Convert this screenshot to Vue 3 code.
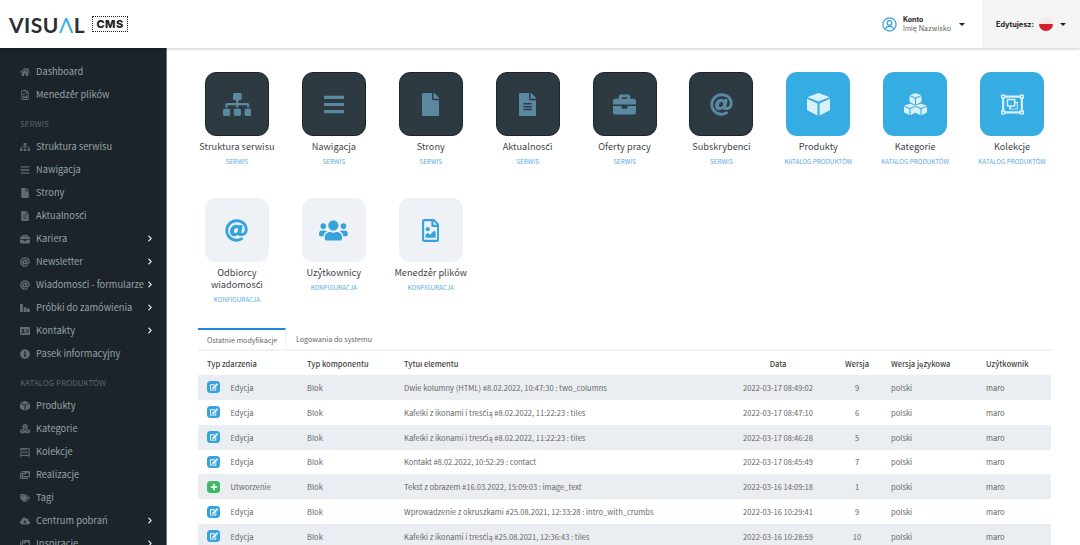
<template>
  <div class="page">
    <header class="topbar">
      <div class="logo">
        <span class="logo-word">VISU<span class="logo-a">Λ</span>L</span>
        <span class="logo-cms">CMS</span>
      </div>
      <div class="account">
        <svg class="account-icon" viewBox="0 0 24 24">
          <circle cx="12" cy="12" r="10.5" />
          <circle cx="12" cy="9.5" r="3.8" />
          <path d="M5.2 19.5c.8-3 3-4.6 6.8-4.6s6 1.6 6.8 4.6" />
        </svg>
        <div class="account-text">
          <strong>Konto</strong>
          <span>Imię Nazwisko</span>
        </div>
        <i class="caret" />
      </div>
      <div class="lang">
        <strong>Edytujesz:</strong>
        <span class="flag" />
        <i class="caret" />
      </div>
    </header>

    <div class="body">
      <aside class="sidebar">
        <template v-for="item in menu" :key="item.label">
          <div v-if="item.section" class="menu-section">{{ item.label }}</div>
          <div v-else class="menu-item">
            <svg class="menu-icon" :viewBox="icons[item.icon].box">
              <path v-for="(d, i) in icons[item.icon].paths" :key="i" :d="d.d || d" :transform="d.t" />
            </svg>
            <span class="menu-label">{{ item.label }}</span>
            <svg v-if="item.more" class="menu-more" :viewBox="icons.chevron.box">
              <path :d="icons.chevron.paths[0]" />
            </svg>
          </div>
        </template>
      </aside>

      <main class="content">
        <section class="tiles">
          <a v-for="tile in tiles" :key="tile.label" :class="['tile', tile.kind]">
            <span class="tile-box">
              <svg :viewBox="icons[tile.icon].box">
                <path v-for="(d, i) in icons[tile.icon].paths" :key="i" :d="d.d || d" :transform="d.t" />
              </svg>
            </span>
            <span class="tile-label">{{ tile.label }}</span>
            <span class="tile-group">{{ tile.group }}</span>
          </a>
        </section>

        <nav class="tabs">
          <span class="tab active">Ostatnie modyfikacje</span>
          <span class="tab">Logowania do systemu</span>
        </nav>

        <table class="events">
          <colgroup>
            <col style="width: 100px" />
            <col style="width: 97px" />
            <col style="width: 326px" />
            <col style="width: 114px" />
            <col style="width: 44px" />
            <col style="width: 98px" />
            <col style="width: 74px" />
          </colgroup>
          <thead>
            <tr>
              <th>Typ zdarzenia</th>
              <th>Typ komponentu</th>
              <th>Tytuł elementu</th>
              <th class="center">Data</th>
              <th class="center">Wersja</th>
              <th class="lang-col">Wersja językowa</th>
              <th>Użytkownik</th>
            </tr>
          </thead>
          <tbody>
            <tr v-for="row in rows" :key="row.date">
              <td>
                <div class="event">
                  <span :class="['event-badge', row.type === 'Edycja' ? 'edit' : 'create']">
                    <svg viewBox="0 0 576 512" v-if="row.type === 'Edycja'"><path :d="icons.edit.paths[0]" /></svg>
                    <svg viewBox="0 0 10 10" v-else><path d="M4 1h2v3h3v2H6v3H4V6H1V4h3z" /></svg>
                  </span>
                  {{ row.type }}
                </div>
              </td>
              <td>Blok</td>
              <td>{{ row.title }}</td>
              <td class="center">{{ row.date }}</td>
              <td class="center">{{ row.version }}</td>
              <td class="lang-col">polski</td>
              <td class="user">maro</td>
            </tr>
          </tbody>
        </table>
      </main>
    </div>
  </div>
</template>

<script setup>
const cubeSolid = 'M239.1 6.3l-208 78c-6 2.2-11 5.6-15.6 10L256 190l240.5-95.7c-4.6-4.4-9.6-7.8-15.6-10l-208-78C262 2.2 250 2.2 239.1 6.3zM0 129v225.4c0 18.2 10.3 34.8 26.5 42.9L232 500V232L0 129zm280 371l205.500-102.700c16.300-8.100 26.500-24.800 26.500-42.900V129L280 232z'
const at = 'M256 8C118.941 8 8 118.919 8 256c0 137.059 110.919 248 248 248 48.154 0 95.342-14.14 135.408-40.223 12.005-7.815 14.625-24.288 5.552-35.372l-10.177-12.433c-7.671-9.371-21.179-11.667-31.373-5.129C325.92 429.757 291.314 440 256 440c-101.458 0-184-82.542-184-184S154.542 72 256 72c100.139 0 184 57.619 184 160 0 38.786-21.093 79.742-58.17 83.693-17.349-.454-16.91-12.857-13.476-30.024l23.433-121.11C394.653 149.75 383.308 136 368.225 136h-44.981a13.518 13.518 0 0 0-13.432 11.993l-.01.092c-14.697-17.901-40.448-21.775-59.971-21.775-74.58 0-137.831 62.234-137.831 151.46 0 65.303 36.785 105.87 96 105.87 26.984 0 57.369-15.637 74.991-38.333 9.522 34.104 40.613 34.103 70.71 34.103C462.609 379.41 504 307.798 504 232 504 95.653 394.023 8 256 8zm-21.68 304.43c-22.249 0-36.07-15.623-36.07-40.771 0-44.993 30.779-72.729 58.63-72.729 22.292 0 35.601 15.241 35.601 40.77 0 45.061-33.875 72.73-58.161 72.73z'
const objectGroup = 'M500 128c6.6 0 12-5.4 12-12V44c0-6.6-5.4-12-12-12h-72c-6.6 0-12 5.4-12 12v12H96V44c0-6.6-5.4-12-12-12H12C5.4 32 0 37.4 0 44v72c0 6.6 5.4 12 12 12h12v256H12c-6.6 0-12 5.4-12 12v72c0 6.6 5.4 12 12 12h72c6.6 0 12-5.4 12-12v-12h320v12c0 6.6 5.4 12 12 12h72c6.6 0 12-5.4 12-12v-72c0-6.6-5.4-12-12-12h-12V128h12zM448 64h32v32h-32V64zM32 64h32v32H32V64zm32 384H32v-32h32v32zm416 0h-32v-32h32v32zm-48-64h-12c-6.6 0-12 5.4-12 12v12H96v-12c0-6.6-5.4-12-12-12H72V128h12c6.6 0 12-5.4 12-12v-12h320v12c0 6.6 5.4 12 12 12h12v256zM362.500 192H320v-52c0-6.600-5.400-12-12-12H140c-6.600 0-12 5.400-12 12v152c0 6.600 5.400 12 12 12h42.500v52c0 6.600 5.400 12 12 12h168c6.600 0 12-5.400 12-12V204c0-6.600-5.400-12-12-12zM160 160h128v112H160V160zm192 192H224v-48h84c6.600 0 12-5.400 12-12v-68h32v128z'

const icons = {
  home: { box: '0 0 576 512', paths: ['M280.37 148.26L96 300.11V464a16 16 0 0 0 16 16l112.06-.29a16 16 0 0 0 15.92-16V368a16 16 0 0 1 16-16h64a16 16 0 0 1 16 16v95.64a16 16 0 0 0 16 16.05L464 480a16 16 0 0 0 16-16V300L295.67 148.26a12.19 12.19 0 0 0-15.3 0zM571.6 251.47L488 182.56V44.05a12 12 0 0 0-12-12h-56a12 12 0 0 0-12 12v72.61L318.47 43a48 48 0 0 0-61 0L4.34 251.47a12 12 0 0 0-1.6 16.9l25.5 31A12 12 0 0 0 45.15 301l235.22-193.74a12.19 12.19 0 0 1 15.3 0L530.9 301a12 12 0 0 0 16.9-1.6l25.5-31a12 12 0 0 0-1.7-16.93z'] },
  fileImage: { box: '0 0 384 512', paths: ['M369.9 97.9L286 14C277 5 264.8-.1 252.1-.1H48C21.5 0 0 21.5 0 48v416c0 26.5 21.5 48 48 48h288c26.5 0 48-21.5 48-48V131.9c0-12.7-5.1-25-14.1-34zM332.1 128H256V51.9l76.1 76.1zM48 464V48h160v104c0 13.3 10.7 24 24 24h104v288H48zm32-48h224V288l-23.5-23.5c-4.7-4.7-12.3-4.7-17 0L176 352l-39.5-39.5c-4.7-4.700-12.300-4.700-17 0L80 352v64zm48-240c-26.5 0-48 21.5-48 48s21.5 48 48 48 48-21.5 48-48-21.5-48-48-48z'] },
  sitemap: { box: '0 0 640 512', paths: ['M128 352H32c-17.67 0-32 14.33-32 32v96c0 17.67 14.33 32 32 32h96c17.67 0 32-14.33 32-32v-96c0-17.67-14.33-32-32-32zm-24-80h192v48h48v-48h192v48h48v-57.59c0-21.17-17.23-38.41-38.41-38.41H344v-64h40c17.67 0 32-14.33 32-32V32c0-17.67-14.33-32-32-32H256c-17.67 0-32 14.33-32 32v96c0 17.67 14.33 32 32 32h40v64H94.41C73.23 224 56 241.23 56 262.41V320h48v-48zm264 80h-96c-17.67 0-32 14.33-32 32v96c0 17.67 14.33 32 32 32h96c17.67 0 32-14.33 32-32v-96c0-17.67-14.33-32-32-32zm240 0h-96c-17.67 0-32 14.33-32 32v96c0 17.67 14.33 32 32 32h96c17.67 0 32-14.33 32-32v-96c0-17.67-14.33-32-32-32z'] },
  bars: { box: '0 0 448 512', paths: ['M16 132h416c8.837 0 16-7.163 16-16V76c0-8.837-7.163-16-16-16H16C7.163 60 0 67.163 0 76v40c0 8.837 7.163 16 16 16zm0 160h416c8.837 0 16-7.163 16-16v-40c0-8.837-7.163-16-16-16H16c-8.837 0-16 7.163-16 16v40c0 8.837 7.163 16 16 16zm0 160h416c8.837 0 16-7.163 16-16v-40c0-8.837-7.163-16-16-16H16c-8.837 0-16 7.163-16 16v40c0 8.837 7.163 16 16 16z'] },
  file: { box: '0 0 384 512', paths: ['M224 136V0H24C10.7 0 0 10.7 0 24v464c0 13.3 10.7 24 24 24h336c13.3 0 24-10.7 24-24V160H248c-13.2 0-24-10.8-24-24zm160-14.1v6.1H256V0h6.1c6.4 0 12.5 2.5 17 7l97.9 98c4.5 4.5 7 10.6 7 16.9z'] },
  fileAlt: { box: '0 0 384 512', paths: ['M224 136V0H24C10.7 0 0 10.7 0 24v464c0 13.3 10.7 24 24 24h336c13.3 0 24-10.7 24-24V160H248c-13.2 0-24-10.8-24-24zm64 236c0 6.6-5.4 12-12 12H108c-6.6 0-12-5.4-12-12v-8c0-6.6 5.4-12 12-12h168c6.6 0 12 5.4 12 12v8zm0-64c0 6.6-5.4 12-12 12H108c-6.6 0-12-5.4-12-12v-8c0-6.6 5.4-12 12-12h168c6.6 0 12 5.4 12 12v8zm0-72v8c0 6.6-5.4 12-12 12H108c-6.6 0-12-5.4-12-12v-8c0-6.6 5.4-12 12-12h168c6.6 0 12 5.4 12 12zm96-114.1v6.1H256V0h6.1c6.4 0 12.5 2.5 17 7l97.9 98c4.5 4.5 7 10.6 7 16.9z'] },
  briefcase: { box: '0 0 512 512', paths: ['M320 336c0 8.84-7.16 16-16 16h-96c-8.84 0-16-7.16-16-16v-48H0v144c0 25.6 22.4 48 48 48h416c25.6 0 48-22.4 48-48V288H320v48zm144-208h-80V80c0-25.6-22.4-48-48-48H176c-25.6 0-48 22.4-48 48v48H48c-25.6 0-48 22.4-48 48v80h512v-80c0-25.6-22.4-48-48-48zm-144 0H192V96h128v32z'] },
  at: { box: '0 0 512 512', paths: [at] },
  cube: { box: '0 0 512 512', paths: [cubeSolid] },
  cubes: {
    box: '0 0 512 512',
    paths: [
      { d: cubeSolid, t: 'translate(123 0) scale(.52)' },
      { d: cubeSolid, t: 'translate(0 235) scale(.52)' },
      { d: cubeSolid, t: 'translate(246 235) scale(.52)' },
    ],
  },
  group: { box: '0 0 512 512', paths: [objectGroup] },
  users: { box: '0 0 640 512', paths: ['M96 224c35.3 0 64-28.7 64-64s-28.7-64-64-64-64 28.7-64 64 28.7 64 64 64zm448 0c35.3 0 64-28.7 64-64s-28.7-64-64-64-64 28.7-64 64 28.7 64 64 64zm32 32h-64c-17.6 0-33.5 7.1-45.1 18.6 40.3 22.1 68.9 62 75.1 109.4h66c17.7 0 32-14.3 32-32v-32c0-35.3-28.7-64-64-64zm-256 0c61.9 0 112-50.1 112-112S381.9 32 320 32 208 82.1 208 144s50.1 112 112 112zm76.8 32h-8.3c-20.8 10-43.9 16-68.5 16s-47.6-6-68.5-16h-8.3C179.6 288 128 339.6 128 403.2V432c0 26.5 21.5 48 48 48h288c26.5 0 48-21.5 48-48v-28.8c0-63.6-51.6-115.2-115.2-115.2zm-223.7-13.4C161.5 263.1 145.6 256 128 256H64c-35.3 0-64 28.7-64 64v32c0 17.7 14.3 32 32 32h65.9c6.3-47.4 34.9-87.3 75.2-109.4z'] },
  chevron: { box: '0 0 320 512', paths: ['M285.476 272.971L91.132 467.314c-9.373 9.373-24.569 9.373-33.941 0l-22.667-22.667c-9.357-9.357-9.375-24.522-.04-33.901L188.505 256 34.484 101.255c-9.335-9.379-9.317-24.544.04-33.901l22.667-22.667c9.373-9.373 24.569-9.373 33.941 0L285.475 239.03c9.373 9.372 9.373 24.568.001 33.941z'] },
  edit: { box: '0 0 576 512', paths: ['M402.6 83.2l90.2 90.2c3.8 3.8 3.8 10 0 13.8L274.4 405.6l-92.8 10.3c-12.4 1.4-22.9-9.1-21.5-21.5l10.3-92.8L388.8 83.2c3.8-3.8 10-3.8 13.8 0zm162-22.9l-48.8-48.8c-15.2-15.2-39.9-15.2-55.2 0l-35.4 35.4c-3.8 3.8-3.8 10 0 13.8l90.2 90.2c3.8 3.8 10 3.8 13.8 0l35.4-35.4c15.2-15.3 15.2-40 0-55.2zM384 346.2V448H64V128h229.8c3.2 0 6.2-1.3 8.5-3.5l40-40c7.6-7.6 2.2-20.5-8.5-20.5H48C21.5 64 0 85.5 0 112v352c0 26.5 21.5 48 48 48h352c26.5 0 48-21.5 48-48V306.2c0-10.7-12.9-16-20.500-8.500l-40 40c-2.200 2.300-3.500 5.300-3.500 8.500z'] },
  info: { box: '0 0 512 512', paths: ['M256 8C119.043 8 8 119.083 8 256c0 136.997 111.043 248 248 248s248-111.003 248-248C504 119.083 392.957 8 256 8zm0 110c23.196 0 42 18.804 42 42s-18.804 42-42 42-42-18.804-42-42 18.804-42 42-42zm56 254c0 6.627-5.373 12-12 12h-88c-6.627 0-12-5.373-12-12v-24c0-6.627 5.373-12 12-12h12v-64h-12c-6.627 0-12-5.373-12-12v-24c0-6.627 5.373-12 12-12h64c6.627 0 12 5.373 12 12v100h12c6.627 0 12 5.373 12 12v24z'] },
  tags: { box: '0 0 640 512', paths: ['M0 252.118V48C0 21.49 21.49 0 48 0h204.118a48 48 0 0 1 33.941 14.059l211.882 211.882c18.745 18.745 18.745 49.137 0 67.882L293.823 497.941c-18.745 18.745-49.137 18.745-67.882 0L14.059 286.059A48 48 0 0 1 0 252.118zM112 64c-26.51 0-48 21.49-48 48s21.49 48 48 48 48-21.49 48-48-21.49-48-48-48zM625.941 293.823L421.823 497.941c-18.745 18.745-49.137 18.745-67.882 0l-.36-.36L527.64 323.522c16.999-16.999 26.36-39.6 26.36-63.64s-9.362-46.641-26.36-63.64L331.397 0h48.721a48 48 0 0 1 33.941 14.059l211.882 211.882c18.745 18.745 18.745 49.137 0 67.882z'] },
  cloud: { box: '0 0 640 512', paths: ['M537.600 226.600c4.100-10.700 6.400-22.400 6.400-34.600 0-53-43-96-96-96-19.700 0-38.100 6-53.300 16.200C367 64.200 315.300 32 256 32c-88.400 0-160 71.600-160 160 0 2.700.1 5.400.2 8.100C40.200 219.800 0 273.200 0 336c0 79.500 64.500 144 144 144h368c70.700 0 128-57.300 128-128 0-61.900-44-113.600-102.400-125.400zM404.700 316.700l-76 76c-4.700 4.700-12.300 4.700-17 0l-76-76c-7.600-7.600-2.200-20.700 8.500-20.700H288v-72c0-8.800 7.200-16 16-16h32c8.800 0 16 7.200 16 16v72h44.200c10.700 0 16.100 13.100 8.500 20.700z'] },
  idCard: { box: '0 0 576 512', paths: ['M528 32H48C21.500 32 0 53.500 0 80v352c0 26.500 21.500 48 48 48h480c26.500 0 48-21.500 48-48V80c0-26.500-21.500-48-48-48zM176 144c35.300 0 64 28.700 64 64s-28.700 64-64 64-64-28.700-64-64 28.700-64 64-64zm112 224H64v-24c0-35.300 43-48 70-48h84c27 0 70 12.700 70 48zm224-32H352v-32h160zm0-64H352v-32h160zm0-64H352v-32h160z'] },
  images: { box: '0 0 576 512', paths: ['M480 416v16c0 26.500-21.500 48-48 48H48c-26.500 0-48-21.500-48-48V176c0-26.500 21.500-48 48-48h16v208c0 44.100 35.900 80 80 80h336zm96-80V80c0-26.500-21.500-48-48-48H144c-26.500 0-48 21.500-48 48v256c0 26.500 21.500 48 48 48h384c26.500 0 48-21.500 48-48zM256 128c0 26.500-21.500 48-48 48s-48-21.500-48-48 21.500-48 48-48 48 21.500 48 48zm-96 144l55.500-55.500c4.700-4.700 12.300-4.700 17 0L272 256l135.500-135.500c4.700-4.700 12.300-4.700 17 0L512 208v112H160v-48z'] },
  samples: { box: '0 0 512 512', paths: ['M0 48h150v416H0zM190 220h130v244H190zM340 300l110-50 62 150v64H340z'] },
}

const menu = [
  { label: 'Dashboard', icon: 'home' },
  { label: 'Menedżer plików', icon: 'fileImage' },
  { label: 'SERWIS', section: true },
  { label: 'Struktura serwisu', icon: 'sitemap' },
  { label: 'Nawigacja', icon: 'bars' },
  { label: 'Strony', icon: 'file' },
  { label: 'Aktualności', icon: 'fileAlt' },
  { label: 'Kariera', icon: 'briefcase', more: true },
  { label: 'Newsletter', icon: 'at', more: true },
  { label: 'Wiadomości - formularze', icon: 'at', more: true },
  { label: 'Próbki do zamówienia', icon: 'samples', more: true },
  { label: 'Kontakty', icon: 'idCard', more: true },
  { label: 'Pasek informacyjny', icon: 'info' },
  { label: 'KATALOG PRODUKTÓW', section: true },
  { label: 'Produkty', icon: 'cube' },
  { label: 'Kategorie', icon: 'cubes' },
  { label: 'Kolekcje', icon: 'group' },
  { label: 'Realizacje', icon: 'images' },
  { label: 'Tagi', icon: 'tags' },
  { label: 'Centrum pobrań', icon: 'cloud', more: true },
  { label: 'Inspiracje', icon: 'images', more: true },
]

const tiles = [
  { label: 'Struktura serwisu', group: 'SERWIS', icon: 'sitemap', kind: 'dark' },
  { label: 'Nawigacja', group: 'SERWIS', icon: 'bars', kind: 'dark' },
  { label: 'Strony', group: 'SERWIS', icon: 'file', kind: 'dark' },
  { label: 'Aktualności', group: 'SERWIS', icon: 'fileAlt', kind: 'dark' },
  { label: 'Oferty pracy', group: 'SERWIS', icon: 'briefcase', kind: 'dark' },
  { label: 'Subskrybenci', group: 'SERWIS', icon: 'at', kind: 'dark' },
  { label: 'Produkty', group: 'KATALOG PRODUKTÓW', icon: 'cube', kind: 'blue' },
  { label: 'Kategorie', group: 'KATALOG PRODUKTÓW', icon: 'cubes', kind: 'blue' },
  { label: 'Kolekcje', group: 'KATALOG PRODUKTÓW', icon: 'group', kind: 'blue' },
  { label: 'Odbiorcy wiadomości', group: 'KONFIGURACJA', icon: 'at', kind: 'light' },
  { label: 'Użytkownicy', group: 'KONFIGURACJA', icon: 'users', kind: 'light' },
  { label: 'Menedżer plików', group: 'KONFIGURACJA', icon: 'fileImage', kind: 'light' },
]

const rows = [
  { type: 'Edycja', title: 'Dwie kolumny (HTML) #8.02.2022, 10:47:30 : two_columns', date: '2022-03-17 08:49:02', version: 9 },
  { type: 'Edycja', title: 'Kafelki z ikonami i treścią #8.02.2022, 11:22:23 : tiles', date: '2022-03-17 08:47:10', version: 6 },
  { type: 'Edycja', title: 'Kafelki z ikonami i treścią #8.02.2022, 11:22:23 : tiles', date: '2022-03-17 08:46:28', version: 5 },
  { type: 'Edycja', title: 'Kontakt #8.02.2022, 10:52:29 : contact', date: '2022-03-17 08:45:49', version: 7 },
  { type: 'Utworzenie', title: 'Tekst z obrazem #16.03.2022, 15:09:03 : image_text', date: '2022-03-16 14:09:18', version: 1 },
  { type: 'Edycja', title: 'Wprowadzenie z okruszkami #25.08.2021, 12:33:28 : intro_with_crumbs', date: '2022-03-16 10:29:41', version: 9 },
  { type: 'Edycja', title: 'Kafelki z ikonami i treścią #25.08.2021, 12:36:43 : tiles', date: '2022-03-16 10:28:59', version: 10 },
]
</script>

<style>
html,
body {
  margin: 0;
  background: #fff;
}
</style>

<style scoped>
.page {
  height: 545px;
  overflow: hidden;
  display: flex;
  flex-direction: column;
  font-family: "Noto Sans CJK SC", "Noto Sans", sans-serif;
  color: #555;
}

.topbar {
  height: 48px;
  flex-shrink: 0;
  display: flex;
  align-items: stretch;
  background: #fff;
  box-shadow: 0 1px 3px rgba(0, 0, 0, 0.2);
  position: relative;
  z-index: 2;
}

.logo {
  display: flex;
  align-items: center;
  margin-right: auto;
  padding-left: 9px;
}

.logo-word {
  font-family: Lato, sans-serif;
  font-size: 21px;
  font-weight: 700;
  letter-spacing: 0.5px;
  color: #2b2f33;
}

.logo-a {
  color: #36ade2;
  font-weight: 400;
}

.logo-cms {
  margin-left: 7px;
  width: 36px;
  height: 16px;
  box-sizing: border-box;
  border: 1px dotted #222;
  display: flex;
  align-items: center;
  justify-content: center;
  font-family: Inter, sans-serif;
  font-size: 11px;
  font-weight: 800;
  letter-spacing: 0.5px;
  color: #222;
}

.account {
  width: 100px;
  display: flex;
  align-items: center;
}

.account-icon {
  width: 15px;
  height: 15px;
  margin-right: 6px;
  fill: none;
  stroke: #36a3dc;
  stroke-width: 2;
  flex-shrink: 0;
}

.account-text {
  display: flex;
  flex-direction: column;
  font-family: Inter, sans-serif;
  font-size: 7px;
  line-height: 9px;
  color: #666;
  margin-right: 8px;
  white-space: nowrap;
}

.account-text strong {
  color: #222;
}

.caret {
  width: 0;
  height: 0;
  border: 3px solid transparent;
  border-top: 3.5px solid #222;
  border-bottom: 0;
}

.lang {
  width: 98px;
  box-sizing: border-box;
  padding-left: 14px;
  display: flex;
  align-items: center;
  background: #f4f4f4;
  font-family: Inter, sans-serif;
  font-size: 7.3px;
  color: #222;
}

.flag {
  width: 14px;
  height: 14px;
  border-radius: 50%;
  margin: 0 7px 0 5px;
  background: linear-gradient(#f4e9ea 50%, #d3202f 50%);
}

.body {
  flex: 1;
  display: flex;
  min-height: 0;
}

.sidebar {
  width: 166px;
  flex-shrink: 0;
  padding-top: 12px;
  background: #1c2329;
  border-right: 1px solid #6d7378;
  font-size: 9.3px;
  color: #93a3a6;
}

.menu-section {
  height: 22px;
  margin-top: 7px;
  padding-left: 20px;
  line-height: 22px;
  font-size: 8px;
  color: #5c666c;
}

.menu-item {
  height: 23px;
  display: flex;
  align-items: center;
  line-height: 23px;
  white-space: nowrap;
}

.menu-icon {
  width: 10px;
  height: 10px;
  margin-left: 20px;
  margin-right: 6px;
  flex-shrink: 0;
  fill: #5f6c71;
}

.menu-label {
  flex: 1;
}

.menu-more {
  width: 6px;
  height: 7px;
  margin-right: 13px;
  fill: #e6ecee;
  flex-shrink: 0;
}

.content {
  flex: 1;
  min-width: 0;
  padding: 0 28px 0 31px;
}

.tiles {
  display: grid;
  grid-template-columns: repeat(9, 96.9px);
  grid-auto-rows: 126px;
  margin: 24px -10px 0 -9.5px;
  height: 256px;
}

.tile {
  display: flex;
  flex-direction: column;
  align-items: center;
  text-align: center;
}

.tile-box {
  width: 64px;
  height: 64px;
  box-sizing: border-box;
  border-radius: 11px;
  display: flex;
  align-items: center;
  justify-content: center;
  margin-bottom: 4px;
}

.tile-box svg {
  height: 23px;
}

.tile-label {
  font-size: 9.2px;
  line-height: 12px;
  color: #3f4448;
  width: 88px;
}

.tile-group {
  font-size: 6.3px;
  line-height: 9px;
  margin-top: 4.5px;
  color: #5aaadc;
  white-space: nowrap;
}

.dark .tile-box {
  background: #2d3a42;
  border: 1px solid #1d252b;
  fill: #5b8aa0;
}

.blue .tile-box {
  background: #36ade2;
  fill: #d9f1fb;
}

.light .tile-box {
  background: #eef1f5;
  fill: #36a3dc;
}

.tabs {
  display: flex;
  height: 21px;
  border-bottom: 2px solid #f2f4f6;
  font-size: 7.15px;
  line-height: 22px;
  color: #666;
}

.tab {
  padding: 0 9px;
  margin-right: 1px;
  white-space: nowrap;
}

.tab.active {
  width: 88px;
  box-sizing: border-box;
  border-top: 2px solid #1e88e5;
  border-right: 1px solid #eef1f5;
  line-height: 20px;
}

.events {
  width: 853px;
  table-layout: fixed;
  border-collapse: collapse;
  font-size: 7.55px;
  color: #666;
}

.events th {
  height: 24px;
  padding: 0 0 0 9px;
  text-align: left;
  font-weight: 500;
  color: #444;
  white-space: nowrap;
}

.events td {
  height: 24.85px;
  padding: 0 0 0 9px;
  white-space: nowrap;
}

.events tbody tr:nth-child(odd) {
  background: #eaeef3;
}

.events .center {
  padding-left: 0;
  text-align: center;
}

.events .lang-col {
  padding-left: 12px;
}

.event {
  display: flex;
  align-items: center;
}

.event-badge {
  width: 13px;
  height: 12px;
  border-radius: 3.5px;
  margin-right: 10.5px;
  display: flex;
  align-items: center;
  justify-content: center;
  fill: #fff;
}

.event-badge svg {
  width: 8px;
  height: 8px;
}

.event-badge.edit {
  background: #36a3dc;
}

.event-badge.create {
  background: #43b864;
}
</style>
